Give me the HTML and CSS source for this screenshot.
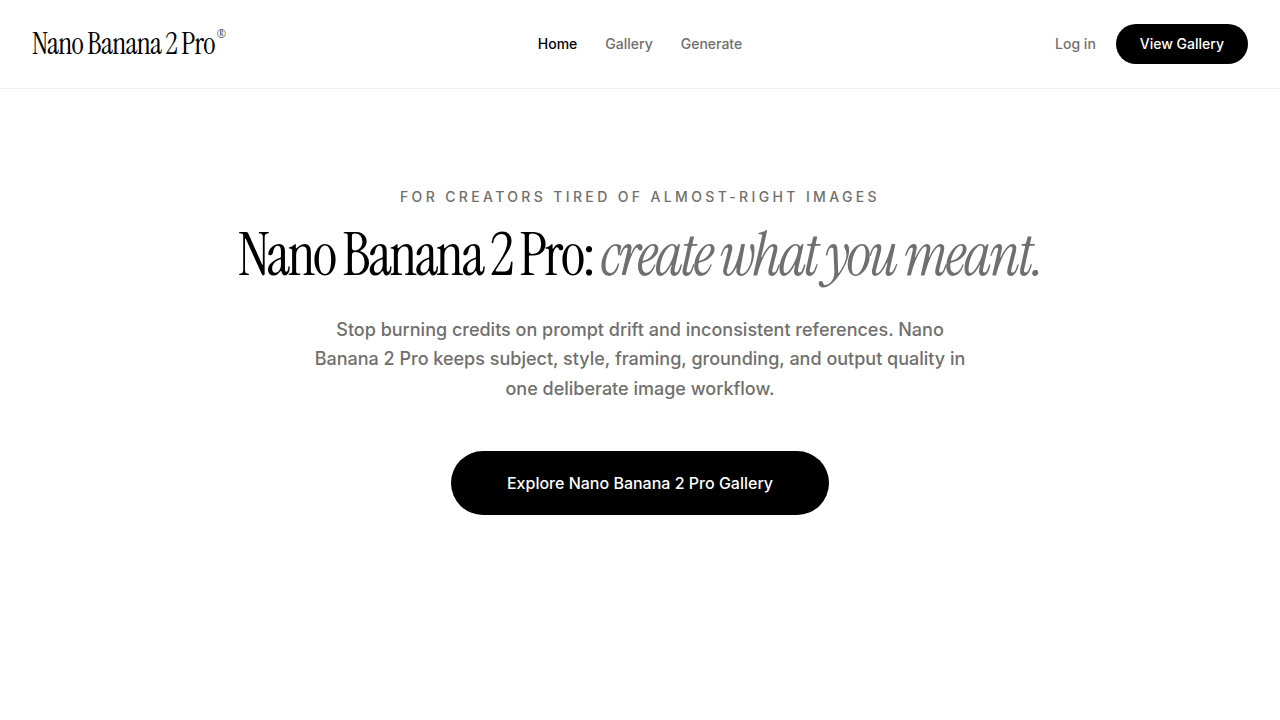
FILE: index.html
```html
<!DOCTYPE html>
<html lang="en">
<head>
    <meta charset="utf-8">
    <meta name="viewport" content="width=device-width, initial-scale=1">
    <title>Nano Banana 2 Pro</title>
    <link rel="stylesheet" href="styles.css">
</head>
<body>
    <header class="header">
        <a class="logo" href="#">Nano Banana 2 Pro<sup>®</sup></a>
        <nav class="nav">
            <a class="active" href="#">Home</a>
            <a href="#gallery">Gallery</a>
            <a href="#generate">Generate</a>
        </nav>
        <div class="actions">
            <a class="login" href="#login">Log in</a>
            <button class="btn" type="button">View Gallery</button>
        </div>
    </header>

    <main class="hero">
        <p class="eyebrow">For creators tired of almost-right images</p>
        <h1>Nano Banana 2 Pro: <em>create what you meant.</em></h1>
        <p class="lead">Stop burning credits on prompt drift and inconsistent references. Nano Banana 2 Pro keeps subject, style, framing, grounding, and output quality in one deliberate image workflow.</p>
        <button class="btn btn-large" type="button">Explore Nano Banana 2 Pro Gallery</button>
    </main>
</body>
</html>
```
FILE: styles.css
```css
* {
    box-sizing: border-box;
}

body {
    margin: 0;
    background: #fff;
    color: #000;
    font-family: Inter, sans-serif;
    font-weight: 500;
}

a {
    color: inherit;
    text-decoration: none;
}

.header {
    display: grid;
    grid-template-columns: 1fr auto 1fr;
    align-items: center;
    padding: 24px 32px;
    border-bottom: 1px solid #f0f0f0;
}

.logo {
    font-family: "Instrument Serif", "Liberation Serif", serif;
    font-size: 30px;
    font-weight: 400;
    line-height: 40px;
    letter-spacing: -0.025em;
    white-space: nowrap;
}

.logo sup {
    margin-left: 2px;
    font-size: 11px;
    line-height: 0;
    vertical-align: 16px;
}

.nav {
    display: flex;
    gap: 28px;
    color: #6f6f6f;
    font-size: 14px;
    line-height: 20px;
}

.nav .active {
    color: #000;
}

.actions {
    display: flex;
    justify-content: flex-end;
    align-items: center;
    gap: 20px;
    font-size: 14px;
    line-height: 20px;
}

.login {
    color: #6f6f6f;
}

.btn {
    height: 40px;
    padding: 0 24px;
    border: 0;
    border-radius: 32px;
    background: #000;
    color: #fff;
    font: inherit;
    cursor: pointer;
}

.hero {
    display: flex;
    flex-direction: column;
    align-items: center;
    padding: 96px 24px;
    text-align: center;
}

.eyebrow {
    margin: 0;
    color: #6f6f6f;
    font-size: 14px;
    line-height: 24px;
    letter-spacing: 0.24em;
    text-transform: uppercase;
}

h1 {
    margin: 16px 0 0;
    font-family: "Instrument Serif", "Liberation Serif", serif;
    font-size: 59px;
    font-weight: 400;
    line-height: 60px;
    letter-spacing: -0.04em;
}

h1 em {
    color: #6f6f6f;
}

.lead {
    max-width: 672px;
    margin: 30px 0 0;
    color: #6f6f6f;
    font-size: 18px;
    line-height: 1.625;
}

.btn-large {
    height: 64px;
    margin-top: 48px;
    padding: 0 56px;
    font-size: 16px;
}
```
